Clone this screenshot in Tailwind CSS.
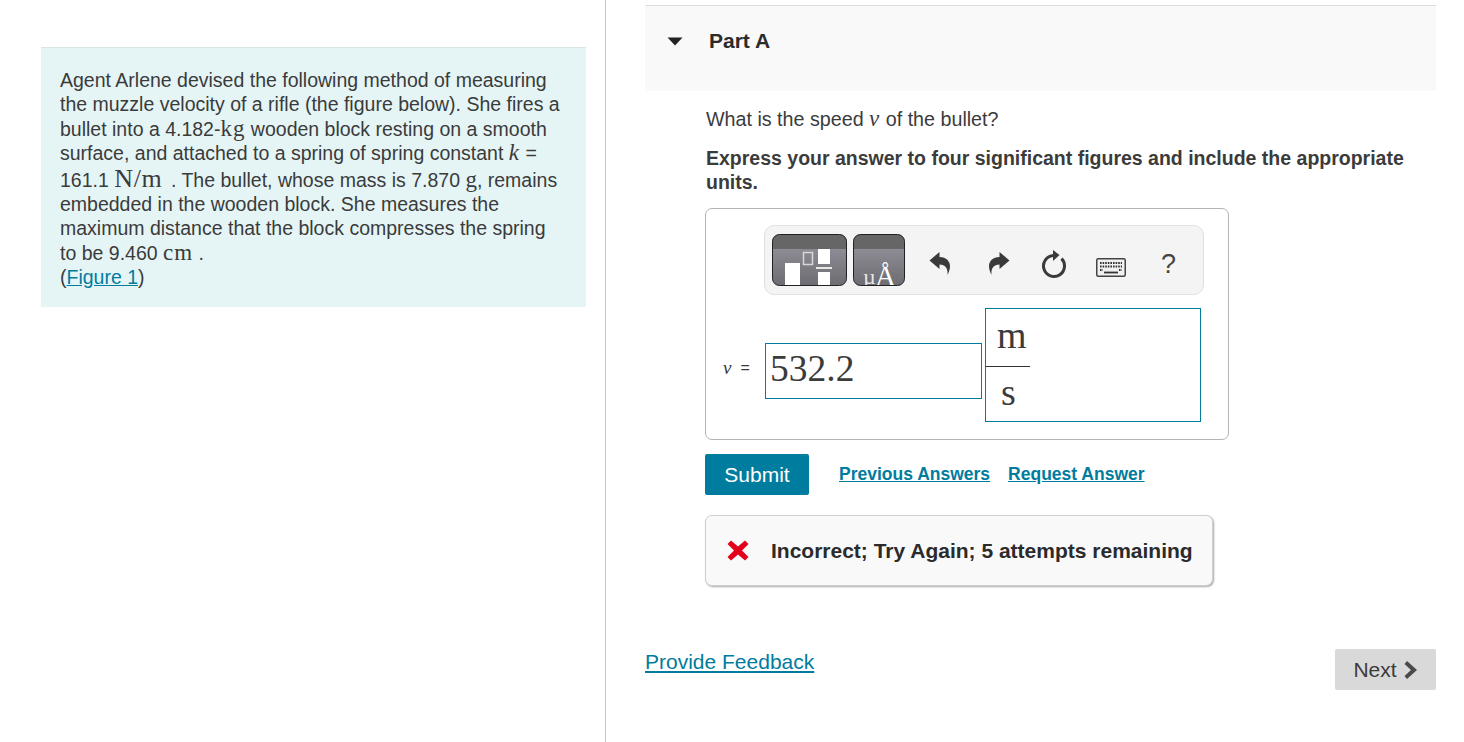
<!DOCTYPE html>
<html lang="en">
<head>
    <meta charset="UTF-8">
    <meta name="viewport" content="width=device-width, initial-scale=1.0">
    <title>Part A</title>
    <script src="https://cdn.jsdelivr.net/npm/@tailwindcss/browser@4"></script>
</head>
<body class="bg-white text-[#3b3b3b] font-['Liberation_Sans',Arial,sans-serif] overflow-hidden">
    <div class="flex h-[742px] w-[1464px]">
        <!-- left column -->
        <div class="w-[606px] shrink-0 border-r border-[#c8c8c8] pl-[41px] pr-[19px] pt-[47px]">
            <div class="bg-[#e5f5f6] border-t border-[#d9e6e6] pl-[19px] pr-[20px] pt-[20px] h-[260px] text-[19.5px] leading-[24.4px]">
                <p>Agent Arlene devised the following method of measuring the muzzle velocity of a rifle (the figure below). She fires a bullet into a 4.182-<span class="font-['Liberation_Serif',serif] text-[23px] leading-none tracking-[1px]">kg</span> wooden block resting on a smooth surface, and attached to a spring of spring constant <i class="font-['Liberation_Serif',serif] text-[23px] leading-none mr-[1px]">k</i> = 161.1 <span class="font-['Liberation_Serif',serif] text-[26px] leading-none tracking-[0.7px] mr-[3px]">N/m</span> . The bullet, whose mass is 7.870 <span class="font-['Liberation_Serif',serif] text-[23px] leading-none">g</span>, remains embedded in the wooden block. She measures the maximum distance that the block compresses the spring to be 9.460 <span class="font-['Liberation_Serif',serif] text-[23px] leading-none tracking-[1px]">cm</span> .<br>(<a href="#" class="text-[#007c9e] underline">Figure 1</a>)</p>
            </div>
        </div>

        <!-- right column -->
        <div class="w-[830px] shrink-0 pl-[39px] pt-[5px]">
            <div class="h-[86px] bg-[#f9f9f9] border-t border-[#dcdcdc] flex items-start pl-[22px] pt-[22px]">
                <svg width="16" height="9" viewBox="0 0 16 9" class="mt-[9px]"><path d="M0.5 0.5 H15.5 L8 8.5 Z" fill="#222"/></svg>
                <span class="ml-[26px] text-[21px] leading-[26px] font-bold text-[#2b2b2b]">Part A</span>
            </div>

            <div class="pl-[60px]">
                <p class="mt-[16px] pl-[1px] text-[19.7px] leading-[24px]">What is the speed <i class="font-['Liberation_Serif',serif] text-[23px] leading-none mr-[1px]">v</i> of the bullet?</p>
                <p class="mt-[15px] pl-[1px] text-[19.5px] leading-[24px] font-bold w-[720px]">Express your answer to four significant figures and include the appropriate units.</p>

                <!-- answer box -->
                <div class="mt-[14px] w-[524px] h-[232px] border border-[#b4b4b4] rounded-[7px] pt-[16px] pl-[58px]">
                    <div class="w-[440px] h-[70px] bg-[#f4f4f4] border border-[#e0e0e0] rounded-[10px] flex items-start pl-[7px] pt-[8px]">
                        <svg width="75" height="52" viewBox="0 0 75 52" class="shrink-0">
                            <defs>
                                <linearGradient id="g1" x1="0" y1="0" x2="0" y2="1"><stop offset="0" stop-color="#9a98a1"/><stop offset="1" stop-color="#6d6c72"/></linearGradient>
                                <clipPath id="c1"><rect x="0.5" y="0.5" width="74" height="51" rx="7"/></clipPath>
                            </defs>
                            <g clip-path="url(#c1)">
                                <rect width="75" height="52" fill="url(#g1)"/>
                                <rect width="75" height="15" fill="#666666"/>
                                <rect x="13" y="29" width="15" height="23" fill="#fff"/>
                                <rect x="31.5" y="18.5" width="9" height="12" fill="none" stroke="#d8d8d8" stroke-width="1.5"/>
                                <rect x="46" y="15" width="12" height="15" fill="#fff"/>
                                <rect x="44" y="33" width="16" height="2" fill="#e8e8e8"/>
                                <rect x="46" y="38" width="12" height="14" fill="#fff"/>
                            </g>
                            <rect x="0.5" y="0.5" width="74" height="51" rx="7" fill="none" stroke="#222"/>
                        </svg>
                        <svg width="52" height="52" viewBox="0 0 52 52" class="ml-[6px] shrink-0">
                            <defs>
                                <clipPath id="c2"><rect x="0.5" y="0.5" width="51" height="51" rx="7"/></clipPath>
                            </defs>
                            <g clip-path="url(#c2)">
                                <rect width="52" height="52" fill="url(#g1)"/>
                                <rect width="52" height="15" fill="#666666"/>
                                <text x="10" y="50" fill="#e8e8e8" font-family="Liberation Serif" font-size="22">µ</text>
                                <text x="22" y="52" fill="#fff" font-family="Liberation Serif" font-size="29">Å</text>
                            </g>
                            <rect x="0.5" y="0.5" width="51" height="51" rx="7" fill="none" stroke="#222"/>
                        </svg>
                        <!-- undo -->
                        <svg width="22" height="24" viewBox="0 0 22 24" class="ml-[24px] mt-[17px] shrink-0"><path d="M0.5 9.5 L10.5 1 V6 C17.5 6 21 10.5 21 15 C21 18 20 21 18.5 24 C19 18 17 13.5 10.5 13.5 V18 Z" fill="#3a3a3a"/></svg>
                        <!-- redo -->
                        <svg width="22" height="24" viewBox="0 0 22 24" class="ml-[37px] mt-[17px] shrink-0"><path d="M21.5 9.5 L11.5 1 V6 C4.5 6 1 10.5 1 15 C1 18 2 21 3.5 24 C3 18 5 13.5 11.5 13.5 V18 Z" fill="#3a3a3a"/></svg>
                        <!-- reset -->
                        <svg width="26" height="28" viewBox="0 0 26 28" class="ml-[31px] mt-[16px] shrink-0"><path d="M12 5.5 A10.5 10.5 0 1 0 20.5 8.6" fill="none" stroke="#3a3a3a" stroke-width="3"/><path d="M12 0 L18.5 5 L12 11 Z" fill="#3a3a3a"/></svg>
                        <!-- keyboard -->
                        <svg width="30" height="19" viewBox="0 0 30 19" class="ml-[29px] mt-[24px] shrink-0">
                            <rect x="0.75" y="0.75" width="28.5" height="17.5" rx="1.5" fill="#f0f0f0" stroke="#444" stroke-width="1.5"/>
                            <path d="M4 5h22M4 8.5h22M4 12h3M23 12h3" stroke="#333" stroke-width="1.8" stroke-dasharray="1.6 1"/>
                            <path d="M8 14.5h14" stroke="#333" stroke-width="1.8"/>
                        </svg>
                        <span class="ml-[35px] mt-[17px] text-[27px] leading-none text-[#444]">?</span>
                    </div>

                    <div class="flex mt-[13px] -ml-[41px]">
                        <div class="flex items-center mt-[32px] h-[56px] w-[42px] shrink-0">
                            <i class="font-['Liberation_Serif',serif] text-[19px]">v</i><span class="ml-[9px] text-[16px]">=</span>
                        </div>
                        <div class="mt-[35px] w-[217px] h-[56px] shrink-0 border border-[#007c9e] pl-[4px] font-['Liberation_Serif',serif] text-[37.5px] leading-[50px]">532.2</div>
                        <div class="ml-[3px] w-[216px] h-[114px] shrink-0 border border-[#007c9e] font-['Liberation_Serif',serif] text-[38px]">
                            <div class="w-[44px] h-[58px] border-b border-[#333] pl-[11px] leading-[53px]">m</div>
                            <div class="pl-[15px] leading-[51px]">s</div>
                        </div>
                    </div>
                </div>

                <div class="mt-[14px] flex items-center">
                    <button class="w-[104px] h-[41px] bg-[#007c9e] rounded-[2px] text-white text-[21px]">Submit</button>
                    <a href="#" class="ml-[30px] text-[#007c9e] underline font-bold text-[17.5px]">Previous Answers</a>
                    <a href="#" class="ml-[18px] text-[#007c9e] underline font-bold text-[17.5px]">Request Answer</a>
                </div>

                <div class="mt-[20px] w-[508px] h-[71px] bg-[#f9f9f9] border border-[#cfcfcf] rounded-[7px] shadow-[1px_1px_2px_#aaa] flex items-center pl-[21px]">
                    <svg width="22" height="21" viewBox="0 0 22 21"><path d="M4 0.5 L11 6.5 L18 0.5 L21.5 4 L15 10.5 L21.5 17 L18 20.5 L11 14.5 L4 20.5 L0.5 17 L7 10.5 L0.5 4 Z" fill="#e2001a"/></svg>
                    <span class="ml-[22px] mt-[1px] text-[21px] font-bold text-[#2b2b2b]">Incorrect; Try Again; 5 attempts remaining</span>
                </div>
            </div>

            <div class="mt-[63px] w-[791px] flex justify-between items-start">
                <a href="#" class="text-[21px] leading-[26px] text-[#007c9e] underline">Provide Feedback</a>
                <button class="w-[101px] h-[41px] bg-[#d9d9d9] rounded-[2px] text-[21px] flex items-center justify-center">Next<svg width="14" height="20" viewBox="0 0 14 20" class="ml-[7px]"><path d="M3 1 L13 10 L3 19 L0.5 16 L7 10 L0.5 4 Z" fill="#4a4a4a"/></svg></button>
            </div>
        </div>
    </div>
</body>
</html>
